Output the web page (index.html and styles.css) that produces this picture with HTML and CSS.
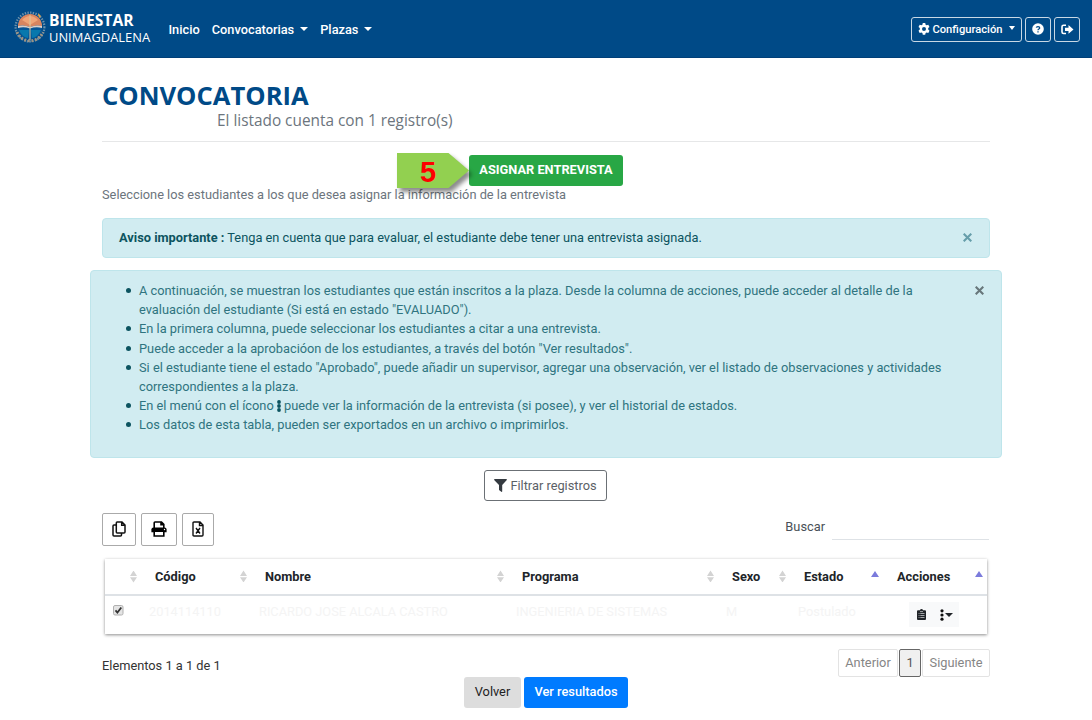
FILE: index.html
```html
<!DOCTYPE html>
<html lang="es">
<head>
<meta charset="utf-8">
<title>Convocatoria</title>
<link rel="stylesheet" href="styles.css">
</head>
<body>
<header class="navbar">
  <a class="brand">
    <svg class="brand-logo" viewBox="0 0 34 34">
      <circle cx="17" cy="17" r="14.4" fill="none" stroke="#6f93ac" stroke-width="2.2" stroke-dasharray="1.4 1.3"/>
      <path d="M4 22A14 14 0 0 0 30 22" fill="none" stroke="#9c9484" stroke-width="3" stroke-dasharray="2 1.6"/>
      <circle cx="17" cy="17" r="12" fill="#075596"/>
      <path d="M5 16A12 12 0 0 1 29 16Q23 14.500 17 17 11 14.500 5 16Z" fill="#d98560"/>
      <path d="M9 10Q17 2 25 10L17 15Z" fill="#f0a477"/>
      <path d="M5 16Q11 14.500 17 17 23 14.500 29 16V18Q23 16.500 17 18.500 11 16.500 5 18Z" fill="#dccfc9"/>
      <path d="M6 20Q9 27 15 28L16 20Z" fill="#0878ad"/>
      <path d="M28 20Q25 27 19 28L18 20Z" fill="#0878ad"/>
      <path d="M17 5V30" stroke="#d9c79d" stroke-width="1"/>
      <path d="M25 3L28 6 26 8Z" fill="#eaa43c"/>
    </svg>
    <span class="brand-text"><b>BIENESTAR</b><span>UNIMAGDALENA</span></span>
  </a>
  <nav class="menu">
    <a>Inicio</a>
    <a>Convocatorias<i class="caret"></i></a>
    <a>Plazas<i class="caret"></i></a>
  </nav>
  <div class="tools">
    <button class="tool tool-config">
      <svg width="12" height="12" viewBox="0 0 12 12" fill="#fff"><path fill-rule="evenodd" d="M4.800 0h2.400l.4 1.700 1 .6 1.700-.5 1.200 2.100-1.300 1.200v1.500l1.300 1.200-1.200 2.100-1.700-.5-1 .6-.4 1.700H4.800l-.4-1.700-1-.6-1.700.5L.5 7.800l1.300-1.200V5.100L.5 3.900l1.200-2.100 1.700.5 1-.6ZM6 4a2 2 0 1 0 0 4 2 2 0 0 0 0-4Z"/></svg>
      <span>Configuración</span><i class="caret"></i>
    </button>
    <button class="tool tool-help">
      <svg width="12" height="12" viewBox="0 0 12 12"><circle cx="6" cy="6" r="5.800" fill="#fff"/><path d="M4.300 4.600C4.500 3.200 7.700 3.100 7.700 4.900 7.700 6 6 6 6 7.200M6 8.300V9.500" fill="none" stroke="#004a87" stroke-width="1.300"/></svg>
    </button>
    <button class="tool tool-exit">
      <svg width="13" height="11" viewBox="0 0 13 11"><path d="M5 1.200H2.600Q1 1.200 1 2.800V7.900Q1 9.500 2.600 9.500H5" fill="none" stroke="#fff" stroke-width="1.600"/><path d="M4 3.800H7.500V1L12.500 5.400 7.500 9.800V7H4Z" fill="#fff"/></svg>
    </button>
  </div>
</header>

<main class="page">
  <h1 class="title">CONVOCATORIA</h1>
  <p class="subtitle">El listado cuenta con 1 registro(s)</p>

  <div class="assign">
    <button class="btn btn-success">ASIGNAR ENTREVISTA</button>
    <div class="step">
      <svg class="step-shape" width="86" height="48" viewBox="0 0 86 48"><path d="M0 0H51.500L72 17.500 51.500 35H0Z" fill="#92d050"/></svg>
      <span class="step-number">5</span>
    </div>
  </div>
  <p class="hint">Seleccione los estudiantes a los que desea asignar la información de la entrevista</p>

  <div class="alert notice">
    <p><b>Aviso importante :</b> Tenga en cuenta que para evaluar, el estudiante debe tener una entrevista asignada.</p>
    <svg class="close close-teal" width="9" height="9" viewBox="0 0 9 9"><path d="M.7.7L8.300 8.300M8.300.7L.7 8.300"/></svg>
  </div>

  <div class="alert guide">
    <ul>
      <li>A continuación, se muestran los estudiantes que están inscritos a la plaza. Desde la columna de acciones, puede acceder al detalle de la<br>evaluación del estudiante (Si está en estado "EVALUADO").</li>
      <li>En la primera columna, puede seleccionar los estudiantes a citar a una entrevista.</li>
      <li>Puede acceder a la aprobacióon de los estudiantes, a través del botón "Ver resultados".</li>
      <li>Si el estudiante tiene el estado "Aprobado", puede añadir un supervisor, agregar una observación, ver el listado de observaciones y actividades<br>correspondientes a la plaza.</li>
      <li>En el menú con el ícono <svg class="dots" width="4" height="12" viewBox="0 0 4 12"><circle cx="2" cy="2" r="1.900"/><circle cx="2" cy="6" r="1.900"/><circle cx="2" cy="10" r="1.900"/></svg> puede ver la información de la entrevista (si posee), y ver el historial de estados.</li>
      <li>Los datos de esta tabla, pueden ser exportados en un archivo o imprimirlos.</li>
    </ul>
    <svg class="close close-grey" width="9" height="9" viewBox="0 0 9 9"><path d="M.7.7L8.300 8.300M8.300.7L.7 8.300"/></svg>
  </div>

  <div class="filter-row">
    <button class="btn btn-outline">
      <svg width="13" height="13" viewBox="0 0 13 13"><path d="M.6 0H12.400Q13.200.5 12.600 1.200L8.200 6V12.600Q8 13.100 7.300 12.800L5 11V6L.4 1.200Q-.2.500.6 0Z" fill="#343a40"/></svg>
      <span>Filtrar registros</span>
    </button>
  </div>

  <div class="table-tools">
    <div class="exports">
      <button class="export export-copy"><svg width="14" height="16" viewBox="0 0 14 16" fill="none" stroke="#111" stroke-width="1.500"><path d="M5.200 1H10L13 4V11Q13 12 12 12H5.200Q4.300 12 4.300 11V2Q4.300 1 5.200 1ZM9.700 1V4.300H13M4.300 4H2Q1 4 1 5V14Q1 15 2 15H8.500Q9.500 15 9.500 14V12"/></svg></button>
      <button class="export export-print"><svg width="16" height="16" viewBox="0 0 16 16"><path d="M3.200 7V1.800Q3.200 1 4 1H10.500L12.800 3.300V7M10 1V3.800H12.800" fill="none" stroke="#000" stroke-width="1.600"/><path d="M2.500 6.500H13.500Q15.600 6.500 15.600 8.500V11.300H.4V8.500Q.4 6.500 2.500 6.500Z"/><path d="M3.200 10.300H12.800V15H3.200Z" fill="#fff" stroke="#000" stroke-width="1.600"/><circle cx="13.500" cy="8.500" r=".7" fill="#fff"/></svg></button>
      <button class="export export-excel"><svg width="12" height="16" viewBox="0 0 12 16" fill="none" stroke="#111" stroke-width="1.400"><path d="M2 1H8L11 4V14Q11 15 10 15H2Q1 15 1 14V2Q1 1 2 1ZM7.500 1V4.500H11M4 7L8 12.500M8 7L4 12.500"/></svg></button>
    </div>
    <label class="search">Buscar<input type="text"></label>
  </div>

  <div class="table">
    <div class="row head">
      <span class="first"><i class="sort"></i></span>
      <span>Código<i class="sort"></i></span>
      <span>Nombre<i class="sort"></i></span>
      <span>Programa<i class="sort"></i></span>
      <span>Sexo<i class="sort"></i></span>
      <span>Estado<i class="sort-up"></i></span>
      <span>Acciones<i class="sort-up"></i></span>
    </div>
    <div class="row body">
      <span class="check"><svg width="11" height="11" viewBox="0 0 11 11"><rect x=".5" y=".5" width="9.500" height="9.500" rx="1.500" fill="#e4e4e4" stroke="#b0b0b0"/><path d="M2.500 5.300L4.400 7.500 8.300 2.500" fill="none" stroke="#333" stroke-width="1.800"/></svg></span>
      <span>2014114110</span>
      <span>RICARDO JOSE ALCALA CASTRO</span>
      <span>INGENIERIA DE SISTEMAS</span>
      <span>M</span>
      <span>Postulado</span>
      <span class="actions">
        <button><svg width="9" height="11" viewBox="0 0 9 11"><path d="M1 1.300H3Q3.200 0 4.500 0T6 1.300H8Q9 1.300 9 2.300V10Q9 11 8 11H1Q0 11 0 10V2.300Q0 1.300 1 1.300Z" fill="#212529"/><path d="M1.600 4.500H2.500M3.300 4.500H7.500M1.600 6.500H2.500M3.300 6.500H7.500M1.600 8.500H2.500M3.300 8.500H7.500M3 2.600H6" stroke="#c5c8ca" stroke-width=".8"/></svg></button>
        <button><svg width="4" height="12" viewBox="0 0 4 12" fill="#111"><circle cx="2" cy="1.800" r="1.600"/><circle cx="2" cy="6" r="1.600"/><circle cx="2" cy="10.200" r="1.600"/></svg><i class="caret"></i></button>
      </span>
    </div>
  </div>

  <div class="table-foot">
    <span class="info">Elementos 1 a 1 de 1</span>
    <div class="pager"><a class="prev">Anterior</a><a class="current">1</a><a class="next">Siguiente</a></div>
  </div>

  <div class="bottom">
    <button class="btn btn-back">Volver</button>
    <button class="btn btn-primary">Ver resultados</button>
  </div>
</main>
</body>
</html>
```
FILE: styles.css
```css
* { box-sizing: border-box; }
body {
  margin: 0;
  width: 1092px;
  height: 720px;
  overflow: hidden;
  background: #fff;
  font: 400 12.8px/19.2px Roboto, sans-serif;
  color: #212529;
}
p, h1, ul { margin: 0; }
button { font: inherit; margin: 0; padding: 0; }
svg { display: block; flex: none; }

.navbar {
  height: 58px;
  background: #004a87;
  border-bottom: 1px solid #003f78;
  display: flex;
  align-items: center;
  padding: 1px 13px 0;
  color: #fff;
}
.brand { display: flex; gap: 2px; width: 155.500px; align-items: center; padding-bottom: 4px; }
.brand-logo { width: 34px; height: 34px; }
.brand-text { display: flex; flex-direction: column; font: 12.800px/18px "Open Sans", sans-serif; padding-top: 2px; }
.brand-text b { font-size: 15.600px; line-height: 18px; }
.brand-text > span { line-height: 17px; font-size: 12.900px; }
.menu { display: flex; gap: 12px; font-weight: 500; padding-top: 1px; }
.caret {
  display: inline-block;
  border: 4px solid transparent;
  border-top-color: currentColor;
  border-bottom: 0;
  margin-left: 6px;
  vertical-align: 3px;
}
.tools { display: flex; gap: 3px; margin-left: auto; margin-right: -1px; }
.tool {
  height: 25px;
  border: 1px solid #c8d8e5;
  border-radius: 3px;
  background: none;
  color: #fff;
  display: flex;
  align-items: center;
  justify-content: center;
  font-size: 11.200px;
}
.tool-config { width: 111px; gap: 2px; font-weight: 500; }
.tool-config .caret { border-width: 3px; border-top-width: 4px; border-bottom: 0; margin-left: 4px; margin-bottom: 2px; }
.tool-config span { padding-top: 1px; }
.tool-help { width: 26px; }
.tool-exit { width: 26px; }

.page { width: 888px; margin-left: 102px; padding-top: 20px; display: flex; flex-direction: column; }
.title { height: 32px; font: 700 25.600px/35px "Open Sans", sans-serif; color: #004a87; }
.subtitle {
  height: 32px;
  padding-left: 115px;
  font: 400 15.360px/21px "Open Sans", sans-serif;
  color: #6c757d;
  border-bottom: 1px solid #e6e7e8;
}
.assign { height: 43px; padding: 13px 0 0 367px; position: relative; }
.btn {
  height: 31px;
  border-radius: 3px;
  border: 1px solid transparent;
  display: flex;
  align-items: center;
  justify-content: center;
}
.btn-success { width: 154px; background: #28a745; color: #fff; font-weight: 700; padding-bottom: 1px; }
.step { position: absolute; left: 295px; top: 11px; width: 86px; height: 48px; }
.step-shape { filter: drop-shadow(3px 4px 2px rgba(0, 0, 0, .45)); overflow: visible; }
.step-number {
  position: absolute;
  left: 23px;
  top: 3px;
  font: 700 29px/32px "Liberation Sans", sans-serif;
  color: #f00;
}
.hint { color: #6c757d; height: 33px; line-height: 20px; }
.alert {
  background: #d1ecf1;
  border: 1px solid #bee5eb;
  border-radius: 4px;
  color: #0c5460;
  display: flex;
  justify-content: space-between;
}
.notice { height: 40px; margin-bottom: 12px; padding: 0 17px 1px 16px; align-items: center; }
.guide { height: 188px; margin: 0 -12px 12px; padding: 10px 17px 10px 16px; color: #2f7480; }
.guide ul { padding-left: 32px; white-space: nowrap; list-style: none; }
.guide li::before {
  content: "";
  display: inline-block;
  width: 5px;
  height: 5px;
  border-radius: 50%;
  background: #0c5460;
  margin: 0 8px 0 -13px;
  vertical-align: 2px;
}
.dots { display: inline-block; vertical-align: -2px; fill: #0c5460; }
.close { fill: none; stroke-width: 2.100; }
.close-teal { stroke: #669eaa; }
.close-grey { stroke: #68777b; margin-top: 5px; }
.filter-row { display: flex; justify-content: center; height: 43px; padding-right: 1px; }
.btn-outline { width: 123px; background: #fff; border-color: #6b7075; color: #5b6167; gap: 3px; }

.table-tools { display: flex; justify-content: space-between; height: 46px; padding-right: 1px; }
.exports { display: flex; gap: 5px; }
.export {
  height: 33px;
  background: #fff;
  border: 1px solid #aaa;
  border-radius: 2px;
  display: flex;
  align-items: center;
  justify-content: center;
  padding-bottom: 2px;
}
.export-copy { width: 34px; }
.export-print { width: 36px; }
.export-excel { width: 32px; }
.search { display: flex; gap: 7px; height: 27px; line-height: 27px; color: #495057; }
.search input { width: 157px; border: 0; border-bottom: 1px solid #dee2e6; background: none; padding: 0; }

.table { width: 882px; margin-left: 3px; height: 75px; box-shadow: 0 1px 3px rgba(0, 0, 0, .45); background: #fff; }
.row { display: grid; grid-template-columns: 44px 110px 257px 210px 72px 93px 96px; }
.head { height: 37px; border-bottom: 2px solid #dee2e6; align-items: center; font-weight: 700; }
.head > span { display: flex; justify-content: space-between; align-items: center; padding-left: 6px; }
.head > .first { justify-content: flex-end; }
.head i { margin-right: 12px; }
.head > span:nth-child(7) i { margin-right: 4px; }
.sort {
  width: 7px;
  height: 12px;
  background: #d3d3d3;
  clip-path: polygon(50% 0, 100% 45%, 0 45%, 0 56%, 100% 56%, 50% 100%, 0 56%, 0 45%);
}
.sort-up { border: 4px solid transparent; border-top: 0; border-bottom: 6px solid #7b7bdc; margin-bottom: 5px; }
.body { color: #f4f4f4; padding-top: 6px; }
.check { padding: 3px 0 0 8px; }
.actions { display: flex; margin: 0 0 0 18px; width: 50px; }
.actions button {
  width: 25px;
  height: 25px;
  background: #f8f9fa;
  border: 0;
  color: #212529;
  display: flex;
  align-items: center;
  justify-content: center;
}
.actions .caret { margin-left: 1px; border-width: 4px 4px 0; }

.table-foot { display: flex; justify-content: space-between; height: 43px; padding-top: 15px; }
.info { line-height: 34px; color: #333; }
.pager { display: flex; height: 28px; line-height: 26px; text-align: center; color: #868686; }
.pager a { border: 1px solid #e3e3e3; border-radius: 2px; }
.pager .prev { width: 60px; }
.pager .current { width: 22px; margin: 0 1px; border-color: #666; background: #f0f0f0; color: #555; }
.pager .next { width: 68px; }
.bottom { display: flex; justify-content: center; gap: 3px; }
.bottom .btn { padding-bottom: 1px; }
.btn-back { width: 57px; background: #ddd; color: #222; }
.btn-primary { width: 104px; background: #007bff; color: #fff; font-weight: 500; }
```
